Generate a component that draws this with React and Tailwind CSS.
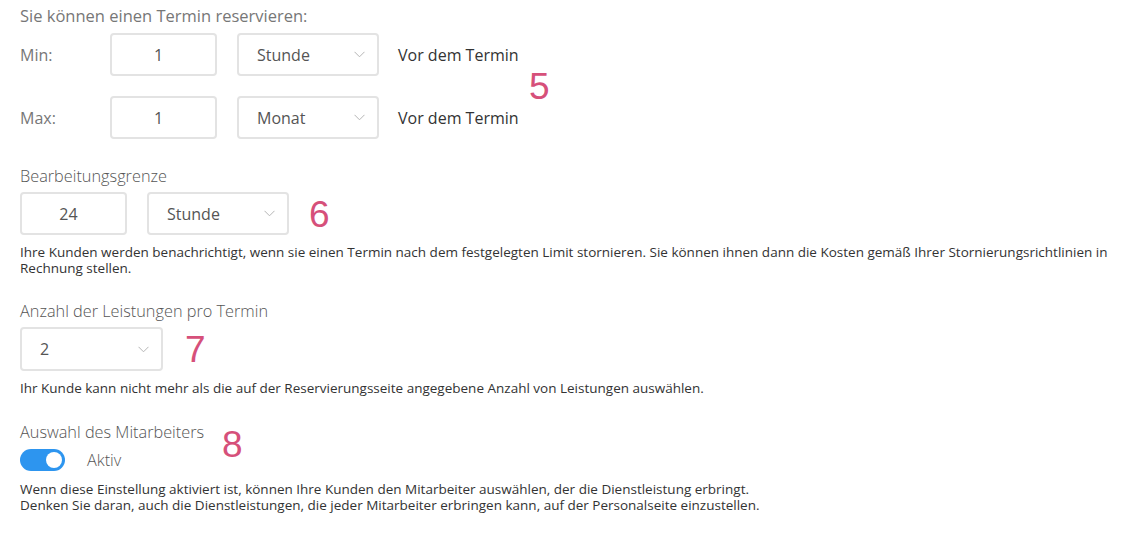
function Chevron() {
  return (
    <svg width="11" height="7" viewBox="0 0 11 7" fill="none" className="shrink-0">
      <path d="M0.5 0.8 L5.5 5.8 L10.5 0.8" stroke="#b5b5b5" strokeWidth="1" />
    </svg>
  )
}

function NumBox({ value, w = "w-[107px]" }) {
  return (
    <div className={`${w} h-[43px] border-2 border-[#e3e3e3] rounded-[4px] flex items-center justify-center pr-[10px] text-[16px] text-[#555]`}>
      {value}
    </div>
  )
}

function SelectBox({ value, w = "w-[142px]", h = "h-[43px]" }) {
  return (
    <div className={`${w} ${h} border-2 border-[#e3e3e3] rounded-[4px] flex items-center justify-between pl-[18px] pr-[12px] text-[16px] text-[#555]`}>
      <span>{value}</span>
      <Chevron />
    </div>
  )
}

function Mark({ n, className }) {
  return (
    <span className={`absolute text-[37px] leading-none text-[#d6507a] ${className}`} style={{ fontFamily: '"Liberation Sans", Arial, sans-serif' }}>
      {n}
    </span>
  )
}

export default function App() {
  return (
    <div className="relative w-[1128px] h-[536px] bg-white overflow-hidden pl-[20px] pt-[5px]" style={{ fontFamily: '"Open Sans", sans-serif' }}>
      <div className="text-[16.5px] leading-[22px] text-[#777]">Sie können einen Termin reservieren:</div>

      <div className="mt-[6px] flex items-center h-[43px]">
        <span className="w-[90px] text-[16px] text-[#777]">Min:</span>
        <NumBox value="1" />
        <div className="ml-[20px]"><SelectBox value="Stunde" /></div>
        <span className="ml-[19px] text-[16px] text-[#333]">Vor dem Termin</span>
      </div>
      <div className="mt-[20px] flex items-center h-[43px]">
        <span className="w-[90px] text-[16px] text-[#777]">Max:</span>
        <NumBox value="1" />
        <div className="ml-[20px]"><SelectBox value="Monat" /></div>
        <span className="ml-[19px] text-[16px] text-[#333]">Vor dem Termin</span>
      </div>

      <div className="mt-[26px] text-[16.3px] font-light leading-[22px] text-[#555]">Bearbeitungsgrenze</div>
      <div className="mt-[5px] flex items-center">
        <NumBox value="24" />
        <div className="ml-[20px]"><SelectBox value="Stunde" /></div>
      </div>
      <p className="mt-[9px] pr-[14px] text-[13.5px] leading-[16px] text-[#333]">
        Ihre Kunden werden benachrichtigt, wenn sie einen Termin nach dem festgelegten Limit stornieren. Sie können ihnen dann die Kosten gemäß Ihrer Stornierungsrichtlinien in Rechnung stellen.
      </p>

      <div className="mt-[24px] text-[16.3px] font-light leading-[22px] text-[#555]">Anzahl der Leistungen pro Termin</div>
      <div className="mt-[5px] flex items-center">
        <SelectBox value="2" w="w-[143px]" h="h-[44px]" />
      </div>
      <p className="mt-[9px] text-[13.5px] leading-[16px] text-[#333]">
        Ihr Kunde kann nicht mehr als die auf der Reservierungsseite angegebene Anzahl von Leistungen auswählen.
      </p>

      <div className="mt-[25px] text-[16.3px] font-light leading-[22px] text-[#555]">Auswahl des Mitarbeiters</div>
      <div className="mt-[5px] flex items-center">
        <div className="w-[45px] h-[22px] rounded-full bg-[#2d95ef] flex items-center justify-end pr-[3px]">
          <div className="w-[16px] h-[16px] rounded-full bg-white" />
        </div>
        <span className="ml-[22px] text-[16.3px] font-light text-[#555]">Aktiv</span>
      </div>
      <p className="mt-[10px] text-[13.5px] leading-[15.5px] text-[#333]">
        Wenn diese Einstellung aktiviert ist, können Ihre Kunden den Mitarbeiter auswählen, der die Dienstleistung erbringt.
        <br />
        Denken Sie daran, auch die Dienstleistungen, die jeder Mitarbeiter erbringen kann, auf der Personalseite einzustellen.
      </p>

      <Mark n="5" className="left-[529px] top-[68px]" />
      <Mark n="6" className="left-[309px] top-[196px]" />
      <Mark n="7" className="left-[185px] top-[331px]" />
      <Mark n="8" className="left-[222px] top-[426px]" />
    </div>
  )
}
